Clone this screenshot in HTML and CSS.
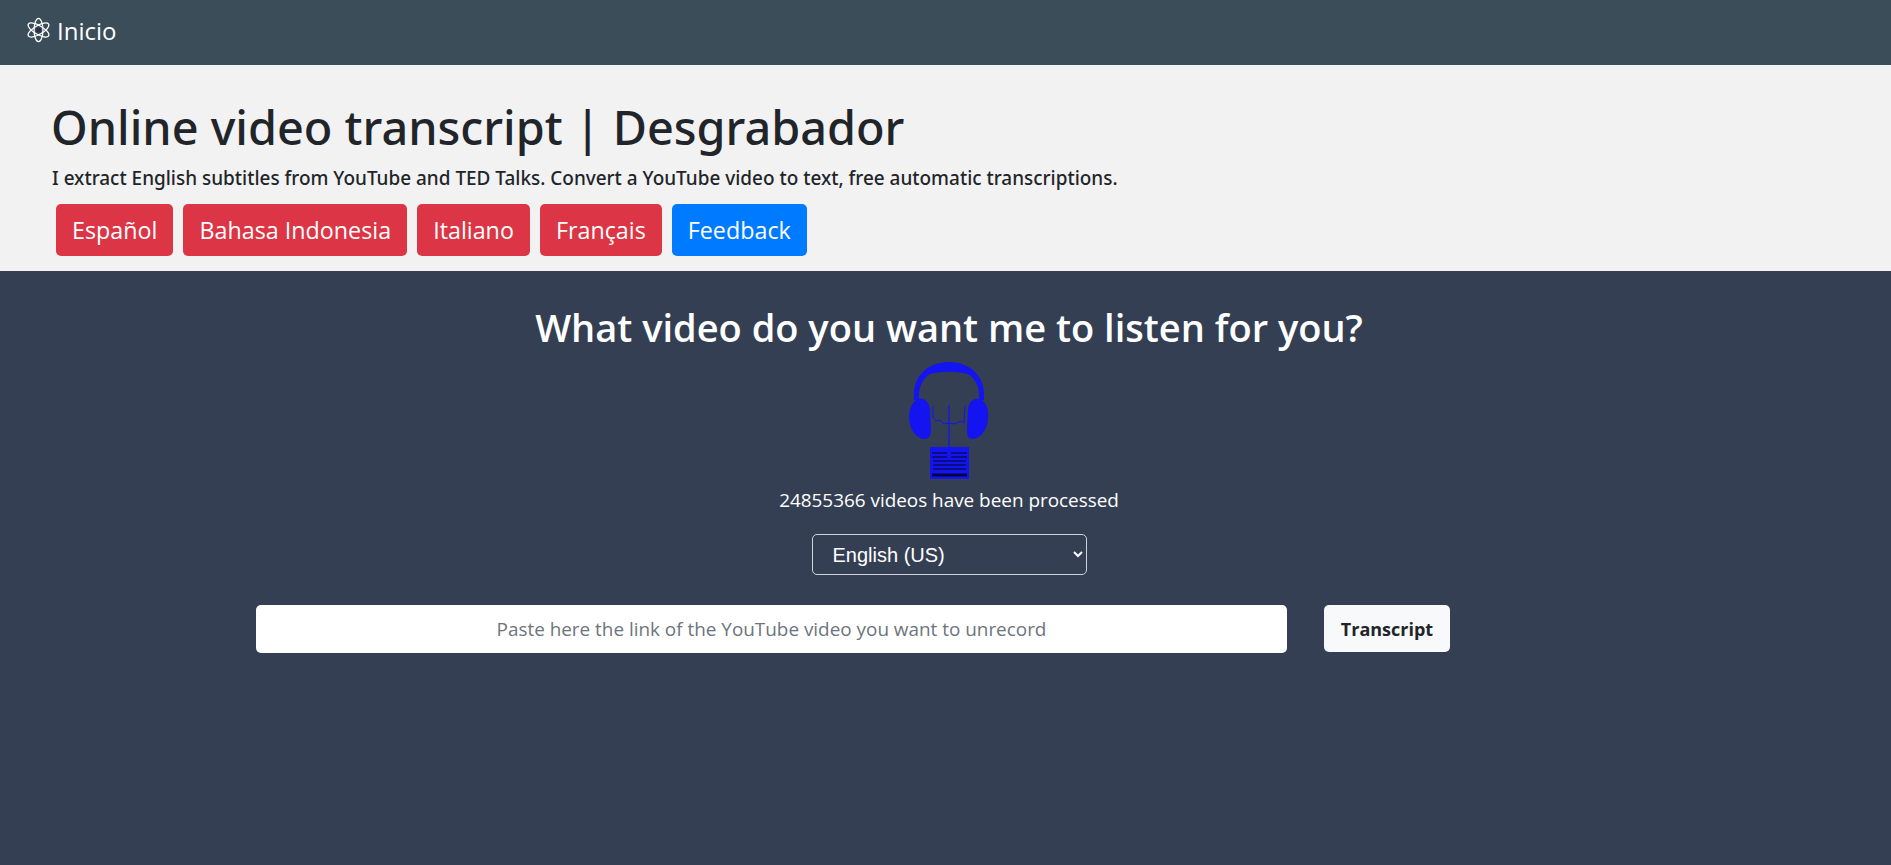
FILE: index.html
```html
<!DOCTYPE html>
<html lang="en">
<head>
  <meta charset="UTF-8">
  <meta name="viewport" content="width=device-width, initial-scale=1.0">
  <title>Online video transcript | Desgrabador</title>
  <link rel="stylesheet" href="styles.css">
</head>
<body>
  <!-- Navbar -->
  <nav class="navbar">
    <a class="brand" href="#">
      <svg class="atom" width="25" height="26" viewBox="0 0 26 26" fill="none" stroke="#fff" stroke-width="1.3">
        <ellipse cx="13" cy="13" rx="4.6" ry="12.2"/>
        <ellipse cx="13" cy="13" rx="4.6" ry="12.2" transform="rotate(60 13 13)"/>
        <ellipse cx="13" cy="13" rx="4.6" ry="12.2" transform="rotate(120 13 13)"/>
        <circle cx="13" cy="13" r="2.6" fill="#2b2f45" stroke="none"/>
      </svg>
      Inicio
    </a>
  </nav>

  <!-- Header -->
  <header class="jumbotron">
    <h1>Online video transcript | Desgrabador</h1>
    <p class="lead">I extract English subtitles from YouTube and TED Talks. Convert a YouTube video to text, free automatic transcriptions.</p>
    <div class="lang-buttons">
      <a class="btn btn-red" href="#">Español</a>
      <a class="btn btn-red" href="#">Bahasa Indonesia</a>
      <a class="btn btn-red" href="#">Italiano</a>
      <a class="btn btn-red" href="#">Français</a>
      <a class="btn btn-blue" href="#">Feedback</a>
    </div>
  </header>

  <!-- Main -->
  <main class="main">
    <h2>What video do you want me to listen for you?</h2>
    <svg class="logo" width="80" height="118" viewBox="0 0 80 118" fill="#1414f0">
      <!-- headband -->
      <path d="M5 38 C3 15 18 0 40 0 C62 0 77 15 75 38 L70 38 C71 26 67 17 59 12 C46 9 34 9 21 12 C13 17 9 26 10 38 Z"/>
      <!-- ear cups -->
      <path d="M8 37 C3 41 0 47 0 55 C0 66 6 76 15 77 C20 77 22 74 22 68 L21 47 C20 39 14 35 8 37 Z"/>
      <path d="M72 37 C77 41 80 47 79 55 C79 66 73 76 64 77 C59 77 58 74 58 68 L59 47 C60 39 66 35 72 37 Z"/>
      <!-- wires -->
      <path d="M24 44 L24 55 L27 59 L31 58 L35 62 L40 61 L46 62 L51 59 L55 61 L56 44" fill="none" stroke="#1414f0" stroke-width="1"/>
      <path d="M40 43 L40 86" fill="none" stroke="#1414f0" stroke-width="1.3"/>
      <!-- text block -->
      <rect x="21" y="85" width="39" height="32"/>
      <path d="M23 91 H38 M42 91 H58 M23 95 H38 M42 95 H58 M24 99 H57 M24 103 H57 M24 107 H57" fill="none" stroke="#0a0a60" stroke-width="1.6"/>
      <path d="M23 113 H58" fill="none" stroke="#05053c" stroke-width="3"/>
    </svg>
    <p class="count">24855366 videos have been processed</p>
    <select class="lang-select">
      <option>English (US)</option>
    </select>
    <form class="url-form">
      <input class="url-input" type="text" placeholder="Paste here the link of the YouTube video you want to unrecord">
      <button class="btn-light" type="button">Transcript</button>
    </form>
  </main>
</body>
</html>
```

FILE: styles.css
```css
/* General Styles */
html, body {
  height: 100%;
}

body {
  margin: 0;
  display: flex;
  flex-direction: column;
  font-family: "Open Sans", "Noto Sans", sans-serif;
  color: #212529;
  background: #343f53;
}

/* Navbar */
.navbar {
  height: 65px;
  flex: none;
  display: flex;
  align-items: center;
  padding: 0 26px 5px;
  box-sizing: border-box;
  background: #3a4d58;
}

.brand {
  display: flex;
  align-items: center;
  gap: 6px;
  color: #fff;
  font-size: 24px;
  text-decoration: none;
}

/* Header */
.jumbotron {
  height: 206px;
  flex: none;
  box-sizing: border-box;
  padding: 32px 52px 0;
  background: #f2f2f3;
  border-top: 2px solid #eef5f7;
}

h1 {
  margin: 0 0 0 -1px;
  font-family: "Noto Sans", sans-serif;
  font-size: 46.8px;
  font-weight: 500;
  line-height: 56px;
}

.lead {
  margin: 9px 0 0;
  font-family: "Noto Sans", sans-serif;
  font-size: 18.95px;
  font-weight: 500;
  line-height: 28px;
}

.lang-buttons {
  display: flex;
  gap: 10px;
  margin: 12px 0 0 4px;
}

.btn {
  height: 52px;
  padding: 0 16px;
  display: flex;
  align-items: center;
  box-sizing: border-box;
  border-radius: 5px;
  color: #fff;
  font-size: 23.3px;
  text-decoration: none;
}

.btn-red {
  background: #dc3545;
}

.btn-blue {
  background: #007bff;
}

/* Main */
.main {
  flex: 1;
  display: flex;
  flex-direction: column;
  align-items: center;
  padding-left: 7px;
  color: #fff;
}

h2 {
  margin: 32px 0 0;
  font-size: 38px;
  font-weight: 600;
  line-height: 48px;
}

.logo {
  margin-top: 11px;
}

.count {
  margin: 7px 0 0;
  font-size: 18.9px;
  line-height: 27px;
}

.lang-select {
  width: 275px;
  height: 41px;
  margin-top: 20px;
  padding: 0 16px;
  border: 1px solid #ced4da;
  border-radius: 5px;
  background: #343f53;
  color: #fff;
  font-family: "Liberation Sans", sans-serif;
  font-size: 20px;
}

.url-form {
  display: flex;
  align-items: flex-start;
  gap: 37px;
  margin: 30px 0 0 0;
  align-self: flex-start;
  padding-left: 249px;
}

.url-input {
  width: 1031px;
  height: 48px;
  box-sizing: border-box;
  padding: 0 16px;
  border: 0;
  border-radius: 5px;
  background: #fff;
  font-family: inherit;
  font-size: 18.9px;
  text-align: center;
}

.url-input::placeholder {
  color: #6c757d;
}

.btn-light {
  width: 126px;
  height: 47px;
  border: 0;
  border-radius: 5px;
  background: #f8f9fa;
  color: #212529;
  font-family: inherit;
  font-size: 18px;
  font-weight: 700;
}
```
